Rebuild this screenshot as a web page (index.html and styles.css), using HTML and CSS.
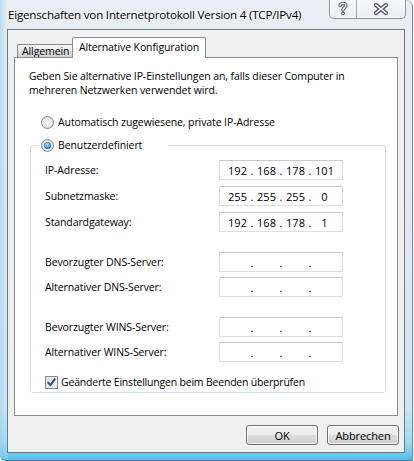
FILE: index.html
```html
<!DOCTYPE html>
<html lang="de">
<head>
<meta charset="utf-8">
<title>Eigenschaften von Internetprotokoll Version 4 (TCP/IPv4)</title>
<link rel="stylesheet" href="styles.css">
</head>
<body>
<div class="window">
  <div class="titlebar">
    <div class="title">Eigenschaften von Internetprotokoll Version 4 (TCP/IPv4)</div>
    <div class="caption-buttons">
      <div class="cbtn help">
        <svg width="27" height="19" viewBox="0 0 27 19">
          <path d="M10.5 6.5 C10.5 3.5 16.5 3.5 16.5 6.5 C16.5 8.6 13.5 8.6 13.5 11" fill="none" stroke="#5c6167" stroke-width="3.6" stroke-linecap="round"/>
          <circle cx="13.5" cy="14.6" r="1.9" fill="#5c6167"/>
          <path d="M10.5 6.5 C10.5 3.5 16.5 3.5 16.5 6.5 C16.5 8.6 13.5 8.6 13.5 11" fill="none" stroke="#ffffff" stroke-width="1.4" stroke-linecap="round"/>
          <circle cx="13.5" cy="14.6" r="0.8" fill="#ffffff"/>
        </svg>
      </div>
      <div class="cbtn close">
        <svg width="48" height="19" viewBox="0 0 48 19">
          <path d="M19 6 L29 14 M29 6 L19 14" stroke="#5c6167" stroke-width="4.2" stroke-linecap="round"/>
          <path d="M19 6 L29 14 M29 6 L19 14" stroke="#ffffff" stroke-width="1.6" stroke-linecap="round"/>
        </svg>
      </div>
    </div>
  </div>

  <div class="client">
    <div class="tabs">
      <div class="tab">Allgemein</div>
      <div class="tab active">Alternative Konfiguration</div>
    </div>

    <div class="panel">
      <p class="intro">Geben Sie alternative IP-Einstellungen an, falls dieser Computer in<br>mehreren Netzwerken verwendet wird.</p>

      <div class="radio-row"><span class="radio"></span><span>Automatisch zugewiesene, private IP-Adresse</span></div>

      <fieldset class="group">
        <legend class="legend"><span class="radio checked"></span><span>Benutzerdefiniert</span></legend>

        <div class="block first">
          <div class="row">
            <span class="label">IP-Adresse:</span>
            <div class="ipbox"><span class="oct">192</span><span class="dot">.</span><span class="oct">168</span><span class="dot">.</span><span class="oct">178</span><span class="dot">.</span><span class="oct">101</span></div>
          </div>
          <div class="row">
            <span class="label">Subnetzmaske:</span>
            <div class="ipbox"><span class="oct">255</span><span class="dot">.</span><span class="oct">255</span><span class="dot">.</span><span class="oct">255</span><span class="dot">.</span><span class="oct">0</span></div>
          </div>
          <div class="row">
            <span class="label">Standardgateway:</span>
            <div class="ipbox"><span class="oct">192</span><span class="dot">.</span><span class="oct">168</span><span class="dot">.</span><span class="oct">178</span><span class="dot">.</span><span class="oct">1</span></div>
          </div>
        </div>

        <div class="block">
          <div class="row">
            <span class="label">Bevorzugter DNS-Server:</span>
            <div class="ipbox"><span class="oct"></span><span class="dot">.</span><span class="oct"></span><span class="dot">.</span><span class="oct"></span><span class="dot">.</span><span class="oct"></span></div>
          </div>
          <div class="row">
            <span class="label">Alternativer DNS-Server:</span>
            <div class="ipbox"><span class="oct"></span><span class="dot">.</span><span class="oct"></span><span class="dot">.</span><span class="oct"></span><span class="dot">.</span><span class="oct"></span></div>
          </div>
        </div>

        <div class="block">
          <div class="row">
            <span class="label">Bevorzugter WINS-Server:</span>
            <div class="ipbox"><span class="oct"></span><span class="dot">.</span><span class="oct"></span><span class="dot">.</span><span class="oct"></span><span class="dot">.</span><span class="oct"></span></div>
          </div>
          <div class="row">
            <span class="label">Alternativer WINS-Server:</span>
            <div class="ipbox"><span class="oct"></span><span class="dot">.</span><span class="oct"></span><span class="dot">.</span><span class="oct"></span><span class="dot">.</span><span class="oct"></span></div>
          </div>
        </div>

        <div class="check-row">
          <span class="checkbox">
            <svg width="11" height="11" viewBox="0 0 11 11"><path d="M2.2 5.6 L4.4 8.2 L8.8 2.2" fill="none" stroke="#2f4f94" stroke-width="2" stroke-linecap="round" stroke-linejoin="round"/></svg>
          </span>
          <span>Geänderte Einstellungen beim Beenden überprüfen</span>
        </div>
      </fieldset>
    </div>

    <div class="actions">
      <button class="btn" type="button">OK</button>
      <button class="btn" type="button">Abbrechen</button>
    </div>
  </div>
</div>
</body>
</html>
```

FILE: styles.css
```css
* { box-sizing: border-box; }

html, body {
  margin: 0;
  padding: 0;
}

body {
  width: 414px;
  height: 461px;
  overflow: hidden;
  background: #f3f6f9;
  font-family: "Open Sans", "Noto Sans", sans-serif;
  font-size: 10.5px;
  letter-spacing: -0.1px;
  line-height: 13px;
  color: #000;
}

.window {
  width: 413px;
  height: 461px;
  display: flex;
  flex-direction: column;
  border-right: 1px solid #7d8894;
  border-bottom: 1px solid #5b7a90;
  border-top-right-radius: 7px;
  border-bottom-left-radius: 6px;
  background:
    linear-gradient(90deg, rgba(150, 205, 235, 0.55) 0, rgba(220, 238, 248, 0.2) 7px, rgba(255, 255, 255, 0) 8px),
    linear-gradient(180deg, #e9eff5 0, #e6edf3 30px, #e0e8ef 55%, #cde6f2 88%, #9edbf3 96%, #52bde9 100%);
}

/* ---------- title bar ---------- */
.titlebar {
  flex: none;
  height: 29px;
  display: flex;
  align-items: flex-start;
}

.title {
  padding: 6px 0 0 8px;
  font-size: 11.6px;
  letter-spacing: -0.2px;
  line-height: 17px;
  color: #000;
  text-shadow: 0 0 6px #fff, 0 0 3px #fff;
  white-space: nowrap;
}

.caption-buttons {
  margin-left: auto;
  margin-right: 6px;
  display: flex;
  height: 20px;
  margin-top: -1px;
  border: 1px solid #8c939b;
  border-top: none;
  border-radius: 0 0 5px 5px;
  background: linear-gradient(180deg, rgba(255, 255, 255, 0.55), rgba(235, 242, 248, 0.45));
  box-shadow: inset 0 0 0 1px rgba(255, 255, 255, 0.6);
  overflow: hidden;
}

.cbtn {
  height: 19px;
  display: flex;
}

.cbtn.help {
  width: 27px;
  border-right: 1px solid #a5abb2;
}

.cbtn.close {
  width: 48px;
}

/* ---------- client area ---------- */
.client {
  flex: none;
  height: 424px;
  margin: 0 7px 0 7px;
  border: 1px solid #6a7784;
  background: #f0f0f0;
  display: flex;
  flex-direction: column;
}

.tabs {
  flex: none;
  display: flex;
  align-items: flex-end;
  height: 27px;
  padding-left: 9px;
  position: relative;
  z-index: 1;
}

.tab {
  height: 13px;
  width: 55px;
  padding-left: 4px;
  border: 1px solid #898c95;
  border-bottom: none;
  border-right: none;
  border-radius: 2px 0 0 0;
  background: linear-gradient(180deg, #f5f5f5 0, #ebebeb 50%, #dddddd 51%, #d3d3d3 100%);
  line-height: 13px;
  white-space: nowrap;
  overflow: hidden;
}

.tab.active {
  height: 21px;
  width: 134px;
  margin-bottom: -1px;
  padding-left: 6px;
  padding-top: 3px;
  border-right: 1px solid #898c95;
  border-radius: 2px 2px 0 0;
  background: #fff;
}

.panel {
  flex: none;
  height: 359px;
  margin: 0 6px;
  border: 1px solid #898c95;
  background: #fff;
  padding-top: 11px;
}

.intro {
  margin: 0 0 0 14px;
  line-height: 14px;
  white-space: nowrap;
}

.radio-row {
  display: flex;
  align-items: center;
  gap: 4px;
  height: 13px;
  margin: 19px 0 0 26px;
  white-space: nowrap;
}

.radio {
  flex: none;
  width: 13px;
  height: 13px;
  border-radius: 50%;
  border: 1px solid #8b8b8b;
  background: radial-gradient(circle at 50% 50%, #f6f6f6 0, #e8e8e8 50%, #cbcbcb 100%);
  display: inline-flex;
  align-items: center;
  justify-content: center;
}

.radio.checked::after {
  content: "";
  width: 7px;
  height: 7px;
  border-radius: 50%;
  background: radial-gradient(circle at 45% 40%, #b8ebff 0, #3a9fdc 45%, #0f4f82 100%);
}

.group {
  margin: 10px 11px 0 15px;
  padding: 0 0 3px 14px;
  border: 1px solid #d5dfe5;
  border-radius: 3px;
  min-width: 0;
}

.legend {
  display: flex;
  align-items: center;
  gap: 4px;
  width: 129px;
  height: 13px;
  margin-left: -6px;
  padding: 0 0 0 2px;
  line-height: 13px;
  white-space: nowrap;
}

.block {
  display: flex;
  flex-direction: column;
  gap: 5px;
  margin-top: 20px;
}

.block.first {
  margin-top: 8px;
  gap: 6px;
}

.row {
  display: flex;
  align-items: center;
  height: 20px;
}

.label {
  width: 174px;
  flex: none;
  white-space: nowrap;
}

.ipbox {
  width: 124px;
  height: 20px;
  display: flex;
  align-items: center;
  padding: 0 5px;
  border: 1px solid #dcdfe3;
  border-top-color: #c4c8cd;
  background: #fff;
  font-size: 11px;
  letter-spacing: 0;
}

.oct {
  width: 25px;
  text-align: center;
}

.dot {
  width: 4px;
  text-align: center;
}

.check-row {
  display: flex;
  align-items: center;
  gap: 3px;
  height: 13px;
  margin-top: 14px;
  white-space: nowrap;
  letter-spacing: -0.2px;
}

.checkbox {
  flex: none;
  width: 13px;
  height: 13px;
  border: 1px solid #8b8b8b;
  background: linear-gradient(135deg, #d9dde2 0, #f7f7f7 100%);
  display: flex;
  align-items: center;
  justify-content: center;
}

/* ---------- buttons ---------- */
.actions {
  flex: none;
  display: flex;
  justify-content: flex-end;
  gap: 9px;
  margin: 9px 5px 0 0;
}

.btn {
  width: 72px;
  height: 20px;
  padding: 0;
  border: 1px solid #707070;
  border-radius: 3px;
  background: linear-gradient(180deg, #f2f2f2 0, #ebebeb 50%, #dddddd 51%, #cfcfcf 100%);
  box-shadow: inset 0 0 0 1px rgba(255, 255, 255, 0.75);
  font-family: inherit;
  font-size: 11px;
  letter-spacing: -0.1px;
  line-height: 13px;
  color: #000;
}
```
